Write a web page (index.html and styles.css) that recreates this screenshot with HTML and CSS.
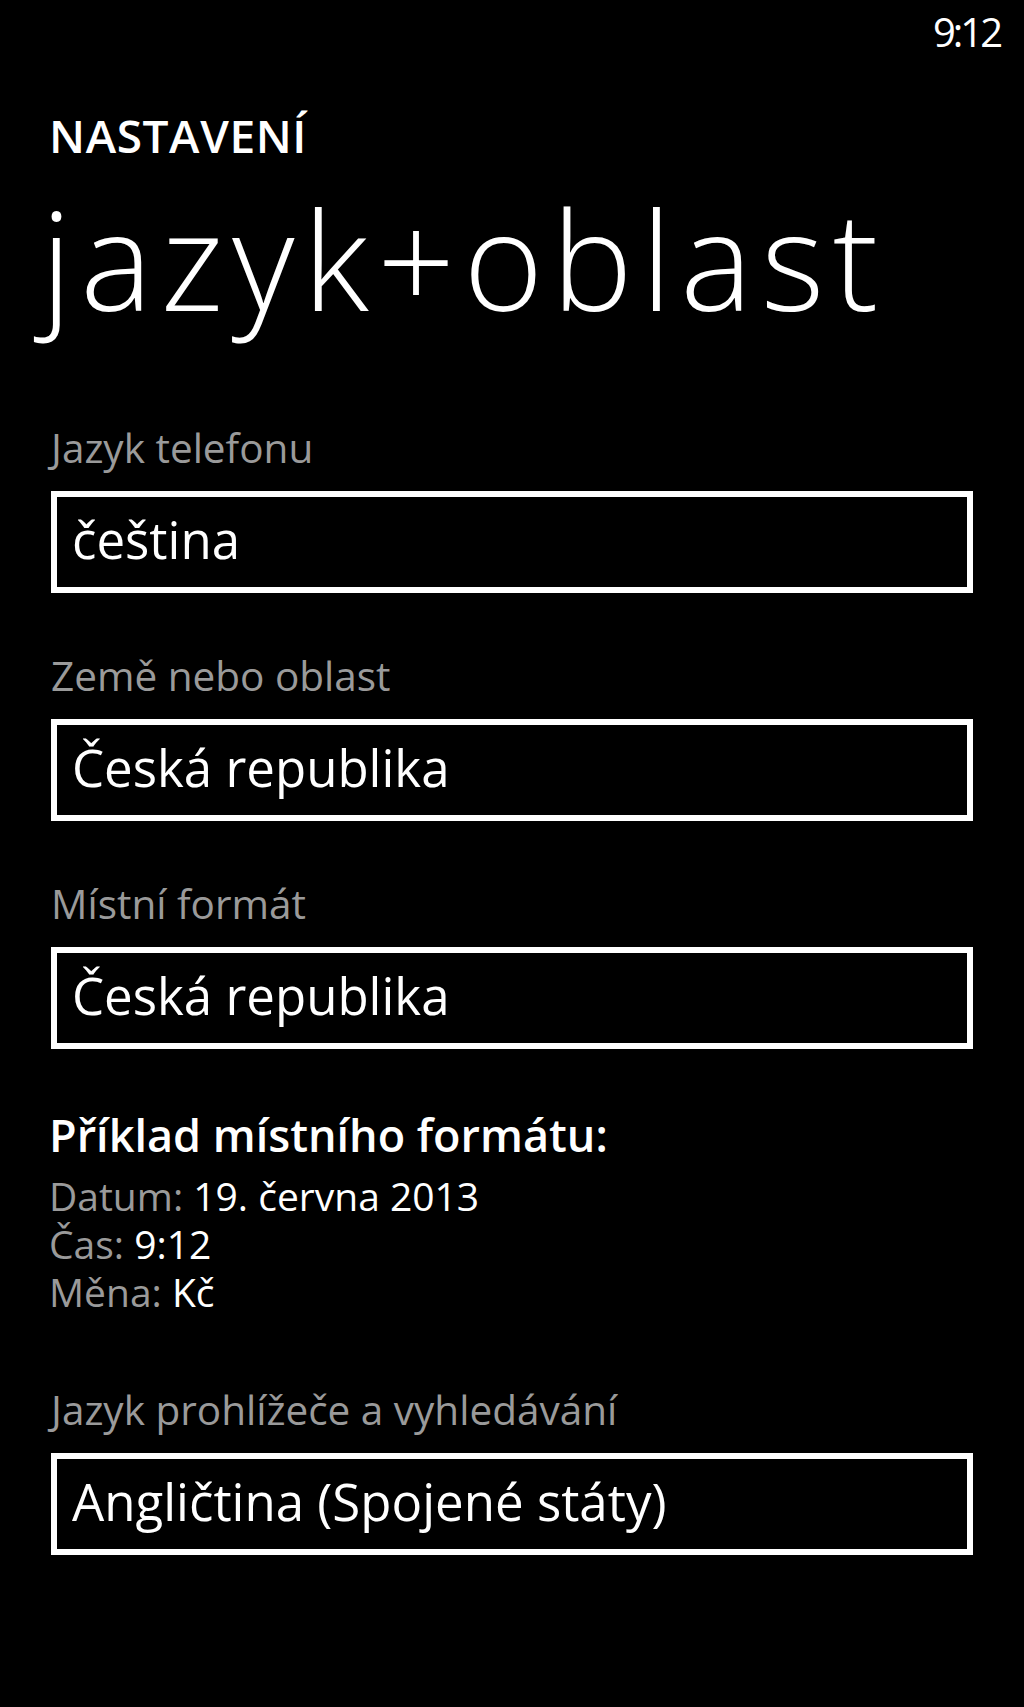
FILE: index.html
```html
<!DOCTYPE html>
<html lang="cs">
<head>
<meta charset="utf-8">
<title>jazyk+oblast</title>
<link rel="stylesheet" href="styles.css">
</head>
<body>
<div class="phone">
  <div class="status"><span class="clock">9:12</span></div>
  <div class="page">
    <div class="app-title">NASTAVENÍ</div>
    <h1 class="page-title">jazyk+oblast</h1>

    <div class="field first">
      <div class="field-label">Jazyk telefonu</div>
      <div class="picker">čeština</div>
    </div>
    <div class="field">
      <div class="field-label">Země nebo oblast</div>
      <div class="picker">Česká republika</div>
    </div>
    <div class="field">
      <div class="field-label">Místní formát</div>
      <div class="picker">Česká republika</div>
    </div>

    <div class="sample">
      <div class="sample-title">Příklad místního formátu:</div>
      <div class="sample-line"><span class="muted">Datum:</span> 19. června 2013</div>
      <div class="sample-line"><span class="muted">Čas:</span> 9:12</div>
      <div class="sample-line"><span class="muted">Měna:</span> Kč</div>
    </div>

    <div class="field last">
      <div class="field-label">Jazyk prohlížeče a vyhledávání</div>
      <div class="picker">Angličtina (Spojené státy)</div>
    </div>
  </div>
</div>
</body>
</html>
```
FILE: styles.css
```css
html, body {
  margin: 0;
  padding: 0;
  background: #000;
}

body {
  width: 1024px;
  height: 1707px;
  overflow: hidden;
  color: #fff;
  font-family: "Open Sans", "Noto Sans", "DejaVu Sans", sans-serif;
}

.phone {
  display: flex;
  flex-direction: column;
}

.status {
  display: flex;
  justify-content: flex-end;
  padding: 12px 24px 0 0;
  height: 40px;
}

.clock {
  font-size: 40px;
  line-height: 40px;
  letter-spacing: -3px;
  font-weight: 400;
}

.page {
  display: flex;
  flex-direction: column;
  padding: 0 51px;
}

.app-title {
  margin: 58px 0 0 -2px;
  font-size: 46px;
  line-height: 50px;
  font-weight: 600;
  letter-spacing: 0.6px;
}

.page-title {
  margin: 24px 0 0 -10px;
  font-size: 136px;
  line-height: 150px;
  font-weight: 300;
  letter-spacing: 8.5px;
}

.field {
  display: flex;
  flex-direction: column;
  gap: 19px;
  margin-top: 59px;
}

.field.first {
  margin-top: 90px;
}

.field.last {
  margin-top: 70px;
}

.field-label {
  font-size: 40.5px;
  line-height: 48px;
  color: #9a9a9a;
}

.picker {
  border: 6px solid #fff;
  height: 90px;
  box-sizing: content-box;
  padding: 0 0 0 15px;
  font-size: 51px;
  line-height: 84px;
}

.sample {
  display: flex;
  flex-direction: column;
  margin: 61px 0 0 -2px;
}

.sample-title {
  font-size: 45px;
  line-height: 50px;
  font-weight: 600;
  margin-bottom: 12px;
}

.sample-line {
  font-size: 39px;
  line-height: 48px;
}

.muted {
  color: #9a9a9a;
}
```
